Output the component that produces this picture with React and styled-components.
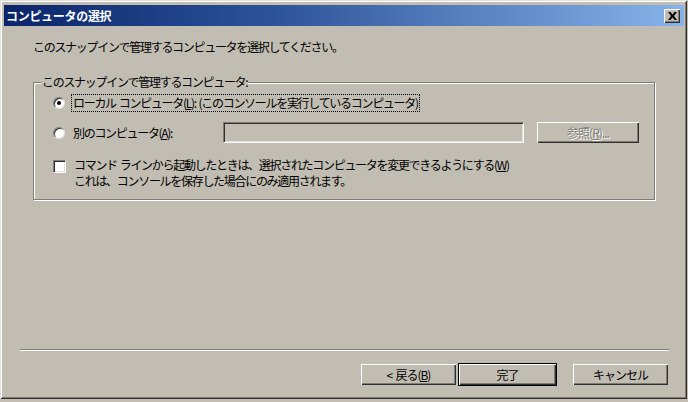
import React from "react";
import styled, { createGlobalStyle } from "styled-components";

const GlobalStyle = createGlobalStyle`
  html, body {
    margin: 0;
    padding: 0;
    background: #c1bdb2;
  }
  body {
    font-family: "Noto Sans CJK JP", "Noto Sans", sans-serif;
    font-size: 12px;
    color: #000;
  }
`;

const Window = styled.div`
  width: 687px;
  height: 399px;
  box-sizing: border-box;
  padding: 5px 3px 3px 4px;
  display: flex;
  flex-direction: column;
  background: #c1bdb2;
  box-shadow: inset 1px 1px #e4e1da, inset -1px -1px #303030,
    inset 2px 2px #ffffff, inset -2px -2px #7f7c74;
`;

const TitleBar = styled.div`
  height: 21px;
  flex: none;
  display: flex;
  align-items: center;
  justify-content: space-between;
  padding: 0 4px 0 2px;
  background: linear-gradient(90deg, #0a246a 0%, #2d5499 40%, #87b3ea 100%);
`;

const Title = styled.span`
  color: #fff;
  font-weight: bold;
  font-size: 12px;
  letter-spacing: -0.3px;
  line-height: 21px;
`;

const CloseButton = styled.div`
  width: 16px;
  height: 14px;
  box-sizing: border-box;
  display: flex;
  align-items: center;
  justify-content: center;
  background: #c1bdb2;
  box-shadow: inset 1px 1px #ffffff, inset -1px -1px #303030,
    inset -2px -2px #7f7c74;
`;

const Body = styled.div`
  flex: 1;
  display: flex;
  flex-direction: column;
  padding: 0 15px 10px 16px;
  letter-spacing: -1.3px;
  word-spacing: 1.5px;
`;

const Intro = styled.div`
  margin: 13px 0 0 13px;
  line-height: 16px;
`;

const Group = styled.div`
  margin: 27px 14px 0 13px;
  height: 118px;
  box-sizing: border-box;
  display: flex;
  flex-direction: column;
  padding: 0 15px 0 19px;
  border: 1px solid #7f7c74;
  box-shadow: inset 1px 1px #ffffff, 1px 1px #ffffff;
`;

const Legend = styled.span`
  align-self: flex-start;
  margin: -9px 0 0 -12px;
  padding: 0 1px;
  line-height: 16px;
  background: #c1bdb2;
`;

const Row = styled.div`
  display: flex;
  align-items: ${(p) => (p.$top ? "flex-start" : "center")};
  margin-top: ${(p) => p.$gap}px;
  height: ${(p) => p.$h}px;
`;

const Radio = styled.span`
  position: relative;
  flex: none;
  width: 12px;
  height: 12px;
  box-sizing: border-box;
  border-radius: 50%;
  background: #fff;
  border: 1px solid;
  border-color: #7f7c74 #e4e1da #e4e1da #7f7c74;
  box-shadow: inset 1px 1px #303030;
  &::after {
    content: "";
    display: ${(p) => (p.$checked ? "block" : "none")};
    position: absolute;
    left: 3px;
    top: 3px;
    width: 4px;
    height: 4px;
    border-radius: 50%;
    background: #000;
  }
`;

const Label = styled.span`
  margin-left: ${(p) => p.$ml || 7}px;
  line-height: 16px;
  width: ${(p) => (p.$w ? `${p.$w}px` : "auto")};
  flex: none;
  outline: ${(p) => (p.$focus ? "1px dotted #000" : "none")};
  padding: 0 1px;
`;

const TextInput = styled.div`
  width: 301px;
  height: 21px;
  box-sizing: border-box;
  flex: none;
  background: #c1bdb2;
  border: 1px solid;
  border-color: #7f7c74 #ffffff #ffffff #7f7c74;
  box-shadow: inset 1px 1px #303030, inset -1px -1px #e4e1da;
`;

const Button = styled.div`
  width: ${(p) => p.$w}px;
  height: 23px;
  box-sizing: border-box;
  flex: none;
  display: flex;
  align-items: center;
  justify-content: center;
  margin-left: ${(p) => p.$ml || 0}px;
  background: #c1bdb2;
  color: ${(p) => (p.$disabled ? "#7f7c74" : "#000")};
  text-shadow: ${(p) => (p.$disabled ? "1px 1px #fff" : "none")};
  letter-spacing: -1px;
  border: 1px solid ${(p) => (p.$default ? "#000" : "transparent")};
  box-shadow: inset 1px 1px #ffffff, inset -1px -1px #303030,
    inset -2px -2px #7f7c74;
`;

const Checkbox = styled.span`
  flex: none;
  width: 13px;
  height: 13px;
  box-sizing: border-box;
  margin-top: 3px;
  background: #fff;
  border: 1px solid;
  border-color: #7f7c74 #ffffff #ffffff #7f7c74;
  box-shadow: inset 1px 1px #303030, inset -1px -1px #e4e1da;
`;

const CheckText = styled.div`
  margin-left: 8px;
  display: flex;
  flex-direction: column;
`;

const TextLine = styled.div`
  height: 16px;
  line-height: 16px;
  white-space: nowrap;
`;

const Spacer = styled.div`
  flex: 1;
`;

const Separator = styled.div`
  height: 2px;
  flex: none;
  border-top: 1px solid #7f7c74;
  border-bottom: 1px solid #ffffff;
  box-sizing: border-box;
`;

const ButtonBar = styled.div`
  display: flex;
  justify-content: flex-end;
  margin-top: 12px;
`;

const CloseIcon = () => (
  <svg width="9" height="8" viewBox="0 0 9 8">
    <path d="M0 0h2.5l2 2.5 2-2.5H9L6 4l3 4H6.5l-2-2.5-2 2.5H0l3-4z" fill="#000" />
  </svg>
);

export default function App() {
  return (
    <>
      <GlobalStyle />
      <Window>
        <TitleBar>
          <Title>コンピュータの選択</Title>
          <CloseButton>
            <CloseIcon />
          </CloseButton>
        </TitleBar>
        <Body>
          <Intro>このスナップインで管理するコンピュータを選択してください。</Intro>
          <Group>
            <Legend>このスナップインで管理するコンピュータ:</Legend>
            <Row $gap={4} $h={18}>
              <Radio $checked />
              <Label $focus>
                ローカル コンピュータ(<u>L</u>): (このコンソールを実行しているコンピュータ)
              </Label>
            </Row>
            <Row $gap={9} $h={23}>
              <Radio />
              <Label $w={149}>
                別のコンピュータ(<u>A</u>):
              </Label>
              <TextInput />
              <Button $w={104} $ml={12} $disabled>
                参照(<u>R</u>)...
              </Button>
            </Row>
            <Row $gap={13} $h={32} $top>
              <Checkbox />
              <CheckText>
                <TextLine>
                  コマンド ラインから起動したときは、選択されたコンピュータを変更できるようにする(<u>W</u>)
                </TextLine>
                <TextLine>これは、コンソールを保存した場合にのみ適用されます。</TextLine>
              </CheckText>
            </Row>
          </Group>
          <Spacer />
          <Separator />
          <ButtonBar>
            <Button $w={97}>
              &lt; 戻る(<u>B</u>)
            </Button>
            <Button $w={99} $ml={1} $default>
              完了
            </Button>
            <Button $w={97} $ml={15}>
              キャンセル
            </Button>
          </ButtonBar>
        </Body>
      </Window>
    </>
  );
}
